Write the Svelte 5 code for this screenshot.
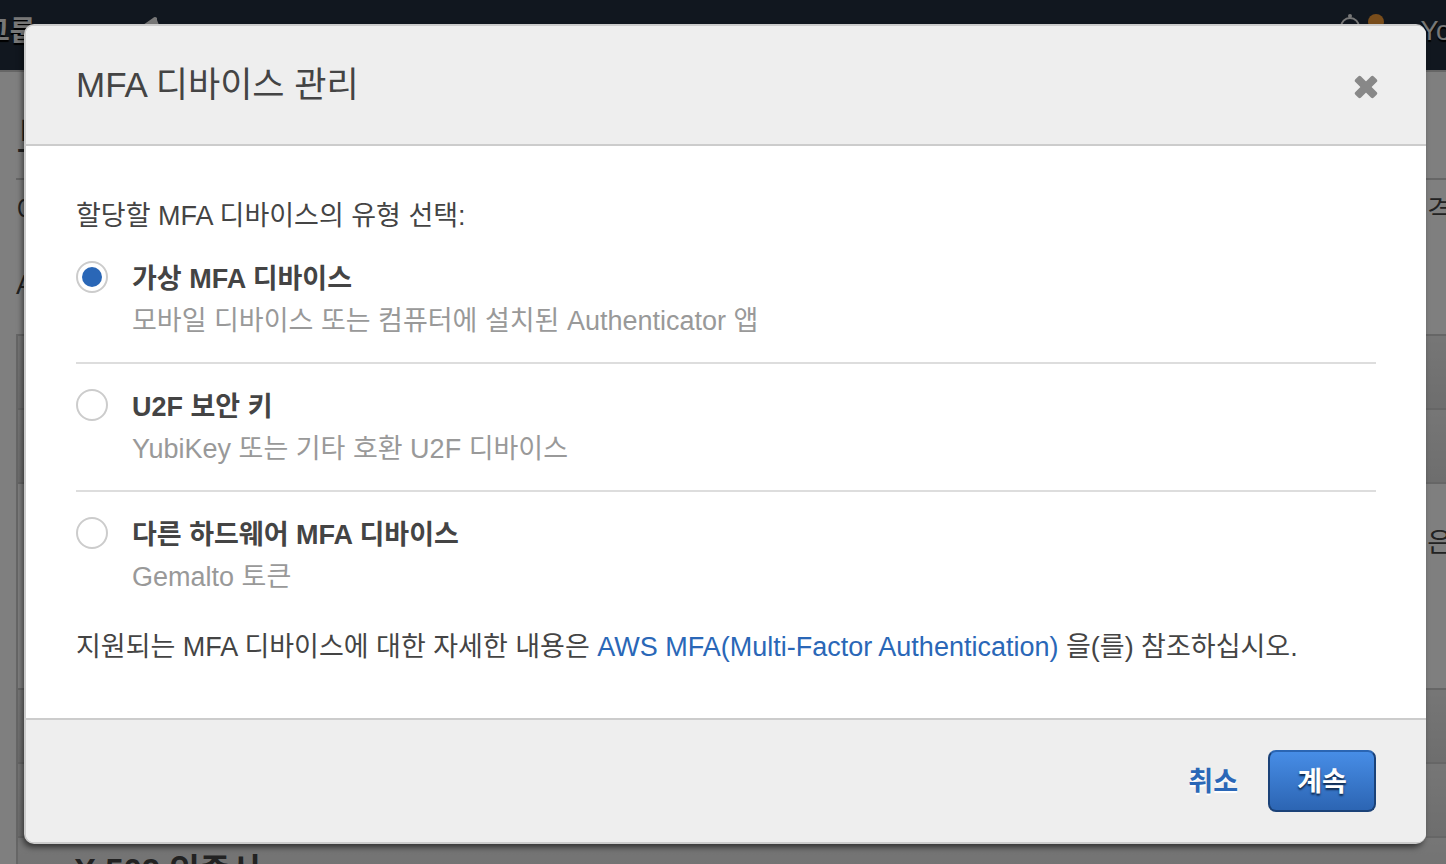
<script>
  const options = [
    { id: 'virtual', title: '가상 MFA 디바이스', hint: '모바일 디바이스 또는 컴퓨터에 설치된 Authenticator 앱' },
    { id: 'u2f', title: 'U2F 보안 키', hint: 'YubiKey 또는 기타 호환 U2F 디바이스' },
    { id: 'hardware', title: '다른 하드웨어 MFA 디바이스', hint: 'Gemalto 토큰' },
  ];
  let selected = $state('virtual');
</script>

<div class="screen">
  <div class="page" aria-hidden="true">
    <div class="topbar">
      <span class="group">그룹</span>
      <svg class="pin" width="26" height="32" viewBox="0 0 26 32"><path d="M1 10L11 3Q13 1 15 3L15 5L17 10L22 17L13 20L8 30L6 29L9 17L1 13z" fill="#eee" /></svg>
      <span class="spacer"></span>
      <svg class="bell" width="48" height="40" viewBox="0 0 48 40">
        <path d="M2 28l3-6v-7a9 9 0 0 1 18 0v7l3 6z" fill="none" stroke="#eee" stroke-width="2" />
        <circle cx="14" cy="4" r="2" fill="#eee" />
        <circle cx="40" cy="10" r="8" fill="#f39a36" />
      </svg>
      <span class="user">Yo</span>
    </div>
    <div class="content">
      <div class="heading">보</div>
      <div class="line"><span>이</span><span>격</span></div>
      <div class="line second">AWS</div>
      <div class="panel">
        <div class="bar"></div>
        <div class="bar"></div>
        <div class="detail"><span>은</span></div>
        <div class="bar"></div>
        <div class="bar"></div>
        <div class="bar last">X.509 인증서</div>
      </div>
    </div>
  </div>

  <div class="overlay">
    <div class="modal" role="dialog" aria-modal="true" aria-labelledby="dialog-title">
      <header>
        <h1 id="dialog-title">MFA 디바이스 관리</h1>
        <button class="close" type="button" aria-label="닫기">
          <svg width="24" height="24" viewBox="0 0 24 24" fill="#888">
            <rect x="-1" y="8" width="26" height="8" rx="2" transform="rotate(45 12 12)" />
            <rect x="-1" y="8" width="26" height="8" rx="2" transform="rotate(-45 12 12)" />
          </svg>
        </button>
      </header>
      <form id="mfa-form" onsubmit={(e) => e.preventDefault()}>
        <fieldset>
          <legend>할당할 MFA 디바이스의 유형 선택:</legend>
          {#each options as option}
            <label class="option" for={option.id}>
              <input type="radio" name="device" id={option.id} value={option.id} bind:group={selected} />
              <span class="text">
                <strong>{option.title}</strong>
                <span class="hint">{option.hint}</span>
              </span>
            </label>
          {/each}
        </fieldset>
        <p>지원되는 MFA 디바이스에 대한 자세한 내용은 <a href="#mfa">AWS MFA(Multi-Factor Authentication)</a> 을(를) 참조하십시오.</p>
      </form>
      <footer>
        <button class="cancel" type="button">취소</button>
        <button class="primary" type="submit" form="mfa-form">계속</button>
      </footer>
    </div>
  </div>
</div>

<style>
  :global(body) {
    background: #fff;
  }
  .screen {
    position: relative;
    min-height: 100vh;
    overflow: hidden;
    font-family: "Liberation Sans", "Noto Sans CJK KR", sans-serif;
    font-size: 27px;
    line-height: 42px;
    color: #444;
  }
  .page {
    position: absolute;
    inset: 0;
    overflow: hidden;
    white-space: nowrap;
  }
  .topbar {
    display: flex;
    align-items: flex-start;
    box-sizing: border-box;
    height: 72px;
    padding-top: 12px;
    border-bottom: 2px solid #ccc;
    background: #232f3e;
    color: #eee;
    text-shadow: 0 2px 1px #000;
  }
  .group {
    margin-left: -16px;
    font-size: 28px;
    font-weight: 700;
    line-height: 40px;
  }
  .pin {
    margin: 3px 0 0 106px;
  }
  .spacer {
    flex: 1;
  }
  .bell {
    margin-right: 36px;
  }
  .user {
    margin-right: -5px;
    font-size: 27px;
    line-height: 38px;
  }
  .content {
    padding-left: 16px;
  }
  .heading {
    box-sizing: border-box;
    height: 108px;
    padding-top: 34px;
    border-bottom: 2px solid #ccc;
    font-size: 44px;
    line-height: 66px;
  }
  .line {
    display: flex;
    justify-content: space-between;
    height: 74px;
    margin-right: -6px;
    padding-top: 10px;
    box-sizing: border-box;
  }
  .second {
    height: 80px;
  }
  .panel {
    border-left: 2px solid #ccc;
  }
  .bar {
    box-sizing: border-box;
    height: 74px;
    border-top: 2px solid #ccc;
    background: linear-gradient(#ededed, #dcdcdc);
  }
  .detail {
    box-sizing: border-box;
    height: 206px;
    padding-top: 38px;
    margin-right: -6px;
    border-top: 2px solid #ccc;
    text-align: right;
  }
  .last {
    padding: 12px 0 0 56px;
    font-size: 33px;
    font-weight: 700;
  }
  .overlay {
    position: relative;
    box-sizing: border-box;
    min-height: 100vh;
    padding: 24px 20px 20px 24px;
    background: rgba(0, 0, 0, 0.5);
  }
  .modal {
    border: 2px solid #ccc;
    border-right: 0;
    border-radius: 10px;
    background: #fff;
    box-shadow: -2px 4px 6px -1px rgba(0, 0, 0, 0.6);
    overflow: hidden;
  }
  header {
    display: flex;
    align-items: center;
    justify-content: space-between;
    height: 118px;
    padding: 0 48px 0 50px;
    border-bottom: 2px solid #ccc;
    background: #eee;
  }
  h1 {
    margin: 0;
    font-size: 35px;
    font-weight: 400;
  }
  button {
    padding: 0;
    border: 0;
    background: none;
    font: inherit;
    cursor: pointer;
  }
  .close {
    display: flex;
    margin-top: 4px;
  }
  form {
    padding: 50px;
  }
  fieldset {
    min-width: 0;
    margin: 0;
    padding: 0;
    border: 0;
  }
  legend {
    padding: 0;
    line-height: 40px;
  }
  .option {
    display: flex;
    gap: 24px;
    padding: 22px 0 20px;
    border-bottom: 2px solid #ddd;
  }
  .option:last-child {
    border-bottom: 0;
  }
  input {
    appearance: none;
    flex: none;
    box-sizing: border-box;
    width: 32px;
    height: 32px;
    margin: 3px 0 0;
    padding: 4px;
    border: 2px solid #ccc;
    border-radius: 50%;
    background: #fff;
  }
  input:checked::before {
    content: "";
    display: block;
    width: 20px;
    height: 20px;
    border-radius: 50%;
    background: #2a67b7;
  }
  .text {
    display: flex;
    flex-direction: column;
  }
  .hint {
    color: #999;
  }
  p {
    margin: 8px 0 0;
  }
  a {
    color: #2a67b7;
    text-decoration: none;
  }
  footer {
    display: flex;
    align-items: center;
    justify-content: flex-end;
    gap: 30px;
    padding: 30px 50px;
    border-top: 2px solid #ccc;
    background: #eee;
    font-weight: 700;
  }
  footer button {
    padding-top: 2px;
  }
  .cancel {
    color: #2a67b7;
    text-shadow: 0 2px 1px #fff;
  }
  .primary {
    box-sizing: border-box;
    min-width: 108px;
    height: 62px;
    border: 2px solid #1b4278;
    border-top-color: #2a65b3;
    border-radius: 8px;
    background: linear-gradient(#478de6, #2c65b3);
    color: #fff;
    text-shadow: 0 2px 2px #0c2548;
  }
</style>
